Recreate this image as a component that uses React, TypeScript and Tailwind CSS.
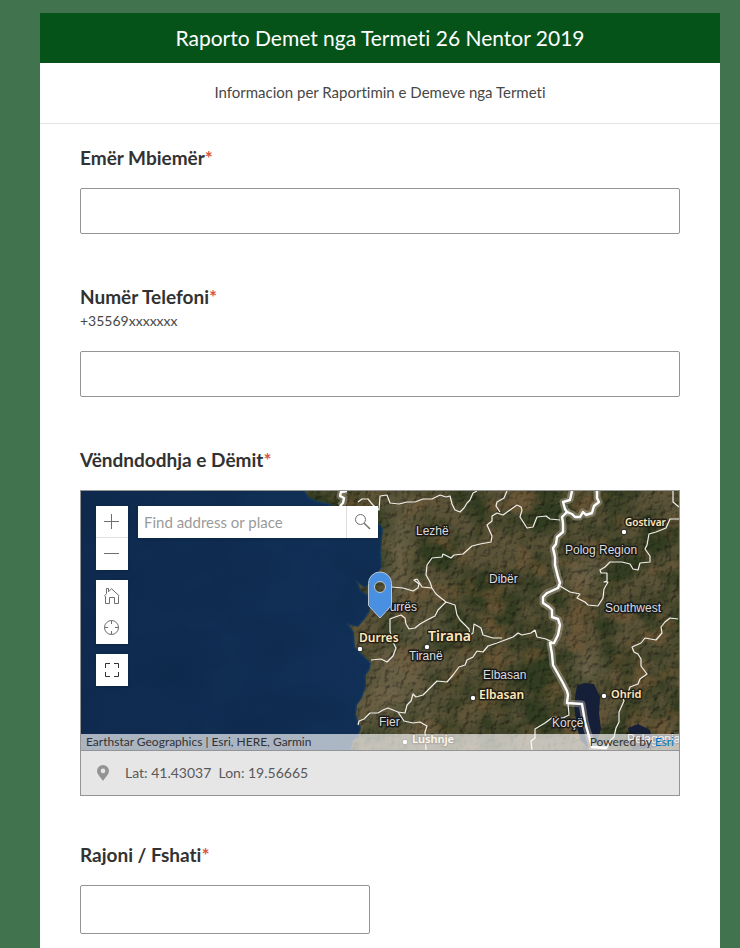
import { useState } from 'react';
import type { ReactNode } from 'react';

const inputClass = 'block w-full rounded-xs border border-[#949494] bg-white px-3 text-base text-[#323232] focus:outline-none focus:ring-1 focus:ring-[#06531a]';
const widgetClass = 'flex h-8 w-8 items-center justify-center bg-white text-[#6e6e6e] hover:bg-gray-100';

// first and second order boundaries, in map units
const regionLines = [
  'M277 11 281 8 287 8 292 14 298 19 299 5 306 4 309 12 318 13 326 11 334 11 342 8 351 8 359 4 365 6 369 5 371 13 374 19 379 21 383 17 386 12 389 9 392 2 396 0',
  'M311 96 322 97 332 100 337 97 338 93 333 89 336 88 341 96 351 97',
  'M365 111 357 119 354 125 346 129 339 133 334 137 328 138 325 133 324 127 320 124 314 126 309 128 309 140 311 149 315 157 312 165 306 171 300 168 290 169',
  'M365 111 374 114 376 124 379 129 382 132 388 138 389 144 392 142 393 133 400 137 402 144 412 147 421 147',
  'M365 111 355 103 351 97 349 91 345 84 346 74 351 67 361 66 362 63 370 67 373 64 382 63 391 55 399 53 410 51 411 45 406 34 411 30 411 25 416 22 422 24 429 19 436 14 440 16 441 19 439 26 446 37 452 36 456 26 465 25 469 28 479 29',
  'M419 21 415 15 416 11 423 7 426 0',
  'M592 0 592 11 598 16',
  'M598 28 589 28 585 37 575 41 568 43 566 54 564 58 569 65 569 71 559 72 557 79 552 78 549 73 541 71 529 71 524 76 519 79 520 82 526 82 526 90 523 91 527 91 523 98 522 107 517 115 507 114 504 111 496 107 499 103 489 101 479 95',
  'M597 128 589 127 584 131 580 136 581 142 575 149 564 147 560 152 551 156 553 161 557 163 560 168 560 175 566 183 559 188 557 193 549 196 547 202 541 204 543 210 538 221 538 231 535 237 533 246 529 250 526 257',
  'M471 151 465 148 456 146 454 139 450 142 441 144 437 142 432 146 424 149 416 152 407 155 402 161 396 160 392 166 386 169 384 174 378 176 372 184 366 191 356 190 342 204 335 206 332 203 330 210 326 214 324 222 317 221 307 217 302 219 297 222 289 222 283 228 278 230 277 234',
  'M317 221 323 230 332 232 339 231 346 235 344 241 345 259',
  'M487 212 488 224 482 227 472 226 464 232 454 238 454 247 450 250 451 259',
];

const countryLines = [
  'M266 0 260 1 259 5 263 7 262 12 259 15',
  'M491 0 489 9 482 11 484 18 486 21 481 26 482 32 482 41 476 46 475 53 472 57 474 66 474 74 477 86 479 92 477 97 466 102 462 106 462 112 468 116 471 119 471 126 477 128 479 134 477 144 473 152 469 152 471 163 472 174 482 192 486 200 487 204 486 212 501 213 504 231 511 256 526 257',
  'M516 0 516 7 518 11 513 15 511 22 505 24 502 21 499 26 494 26 491 23 486 21',
];

const regionLabels = [
  { x: 335, y: 44, text: 'Lezhë' },
  { x: 408, y: 92, text: 'Dibër' },
  { x: 300, y: 120, text: 'Durrës' },
  { x: 484, y: 63, text: 'Polog Region' },
  { x: 524, y: 121, text: 'Southwest' },
  { x: 328, y: 169, text: 'Tiranë' },
  { x: 402, y: 188, text: 'Elbasan' },
  { x: 298, y: 235, text: 'Fier' },
  { x: 471, y: 236, text: 'Korçë' },
  { x: 546, y: 252, text: 'Pelagonia' },
];

const cities = [
  { x: 544, y: 35, text: 'Gostivar', cx: 543, cy: 41, size: 10 },
  { x: 278, y: 151, text: 'Durres', cx: 279, cy: 158, size: 12 },
  { x: 347, y: 150, text: 'Tirana', cx: 346, cy: 156, size: 14 },
  { x: 398, y: 208, text: 'Elbasan', cx: 392, cy: 207, size: 12 },
  { x: 530, y: 207, text: 'Ohrid', cx: 523, cy: 205, size: 11 },
  { x: 331, y: 252, text: 'Lushnje', cx: 324, cy: 251, size: 11 },
];

const landPath = 'M224 0 228 6 236 10 246 12 256 16 268 17 282 22 292 26 297 31 302 37 301 48 300 61 301 76 294 88 284 97 277 92 280 99 287 104 290 111 289 120 284 128 277 136 268 134 273 141 274 156 281 163 290 172 289 178 285 184 285 195 281 207 276 214 275 224 280 237 277 246 272 250 270 259H598V0Z';

function SatelliteMap() {
  return (
    <svg className="absolute inset-0 h-full w-full" viewBox="0 0 598 259" preserveAspectRatio="xMidYMid slice" role="img" aria-label="Map">
      <defs>
        <linearGradient id="sea" x1="0" y1="0" x2="1" y2="0">
          <stop offset="0" stopColor="#0f2b4f" />
          <stop offset="0.25" stopColor="#102d52" />
          <stop offset="0.5" stopColor="#123158" />
        </linearGradient>
        <filter id="seaNoise" x="0" y="0" width="100%" height="100%" colorInterpolationFilters="sRGB">
          <feTurbulence type="fractalNoise" baseFrequency="0.012 0.02" numOctaves="3" seed="4" />
          <feColorMatrix values="0 0 0 0 0.04  0 0 0 0 0.14  0 0 0 0 0.26  2 0 0 0 -0.8" />
        </filter>
        <filter id="green" x="0" y="0" width="100%" height="100%" colorInterpolationFilters="sRGB">
          <feTurbulence type="fractalNoise" baseFrequency="0.025" numOctaves="7" seed="11" />
          <feColorMatrix values="0 0 0 0 0.17  0 0 0 0 0.22  0 0 0 0 0.11  3.5 0 0 0 -1.3" />
        </filter>
        <filter id="brown" x="0" y="0" width="100%" height="100%" colorInterpolationFilters="sRGB">
          <feTurbulence type="fractalNoise" baseFrequency="0.035 0.045" numOctaves="7" seed="27" />
          <feColorMatrix values="0 0 0 0 0.47  0 0 0 0 0.36  0 0 0 0 0.22  0 4 0 0 -2" />
        </filter>
        <filter id="relief" x="0" y="0" width="100%" height="100%" colorInterpolationFilters="sRGB">
          <feTurbulence type="fractalNoise" baseFrequency="0.16" numOctaves="4" seed="3" result="n" />
          <feColorMatrix in="n" values="0 0 0 0 0  0 0 0 0 0  0 0 0 0 0  1 0 0 0 0" />
          <feDiffuseLighting surfaceScale="3" diffuseConstant="1.3" lightingColor="#ffffff">
            <feDistantLight azimuth="225" elevation="50" />
          </feDiffuseLighting>
        </filter>
        <radialGradient id="plain" cx="0.5" cy="0.5" r="0.5">
          <stop offset="0" stopColor="#73684e" stopOpacity="0.8" />
          <stop offset="1" stopColor="#73684e" stopOpacity="0" />
        </radialGradient>
        <clipPath id="land">
          <path d={landPath} />
        </clipPath>
      </defs>

      <rect width="598" height="259" fill="url(#sea)" />
      <rect width="598" height="259" filter="url(#seaNoise)" opacity="0.35" />
      <path d={landPath} fill="none" stroke="#1c4560" strokeWidth="3" opacity="0.5" />
      <g clipPath="url(#land)">
        <rect width="598" height="259" fill="#5a5338" />
        <rect width="598" height="259" filter="url(#green)" opacity="0.85" />
        <rect width="598" height="259" filter="url(#brown)" opacity="0.6" />
        <ellipse cx="318" cy="60" rx="26" ry="80" fill="url(#plain)" />
        <ellipse cx="310" cy="200" rx="60" ry="75" fill="url(#plain)" />
        <ellipse cx="345" cy="140" rx="40" ry="22" fill="url(#plain)" />
        <ellipse cx="507" cy="180" rx="26" ry="26" fill="url(#plain)" />
        <ellipse cx="505" cy="85" rx="24" ry="22" fill="url(#plain)" />
        <rect width="598" height="259" filter="url(#relief)" opacity="0.5" className="mix-blend-multiply" />
      </g>
      <path d="M496 194 504 192 513 193 519 206 518 222 520 238 516 250 508 257 500 250 496 237 493 214Z" fill="#161f38" />
      <path d="M547 237 557 233 569 239 573 257 551 259 549 247Z" fill="#161f38" />

      <g fill="none" strokeLinejoin="round">
        {countryLines.map((d) => <path key={d} d={d} stroke="#c8bfae" strokeOpacity="0.4" strokeWidth="7" />)}
        {regionLines.map((d) => <path key={d} d={d} stroke="#f1efe9" strokeWidth="1.2" />)}
        {countryLines.map((d) => <path key={d} d={d} stroke="#ffffff" strokeWidth="2.4" />)}
      </g>

      <g fontFamily="'Liberation Sans', Arial, sans-serif" fontSize="12" fill="#dcdcdc" stroke="#1a1a1a" strokeWidth="3" strokeLinejoin="round" paintOrder="stroke">
        {regionLabels.map((l) => <text key={l.text} x={l.x} y={l.y}>{l.text}</text>)}
      </g>
      <g fontFamily="'Noto Sans', 'Open Sans', sans-serif" fontWeight="600" fill="#ffe9bd" stroke="#241f14" strokeWidth="3" strokeLinejoin="round" paintOrder="stroke">
        {cities.map((c) => <text key={c.text} x={c.x} y={c.y} fontSize={c.size}>{c.text}</text>)}
      </g>
      {cities.map((c) => <circle key={c.text} cx={c.cx} cy={c.cy} r="2.8" fill="#fff" stroke="#222" strokeWidth="1" />)}

      <path fillRule="evenodd" d="M287.500 92.500a11.500 11.500 0 0 1 23 0v22L299 127l-11.500-12.500ZM304.500 96a5.500 5.500 0 1 0-11 0 5.500 5.500 0 0 0 11 0Z" fill="#4a90e2" stroke="#b9c6d2" strokeWidth="1" />
    </svg>
  );
}

function Label({ htmlFor, children }: { htmlFor: string; children: ReactNode }) {
  return (
    <label htmlFor={htmlFor} className="block text-[19px]/6 font-bold text-[#323232]">
      {children}<span className="text-[#d9553f]">*</span>
    </label>
  );
}

export default function App() {
  const [form, setForm] = useState({ name: '', phone: '', place: '', village: '' });

  function set(key: string, value: string) {
    setForm((p) => ({ ...p, [key]: value }));
  }

  return (
    <div className="flex min-h-screen flex-col bg-[#41734f] pt-[13px] pr-5 pl-10 font-['Lato',sans-serif] [font-variant-ligatures:none]">
      <main className="flex flex-1 flex-col bg-white">
        <header className="bg-[#06531a] px-5 py-[11px] text-center">
          <h1 className="text-[21px]/7 text-white">Raporto Demet nga Termeti 26 Nentor 2019</h1>
        </header>
        <p className="border-b border-[#e3e3e3] px-10 pt-[17px] pb-[19px] text-center text-[15px]/6 text-[#474747]">Informacion per Raportimin e Demeve nga Termeti</p>

        <form className="px-10 pt-[22px]" onSubmit={(e) => e.preventDefault()}>
          <div className="mb-[51px]">
            <Label htmlFor="name">Emër Mbiemër</Label>
            <input id="name" value={form.name} onChange={(e) => set('name', e.target.value)} required className={`${inputClass} mt-[18px] h-[46px]`} />
          </div>

          <div className="mb-[51px]">
            <Label htmlFor="phone">Numër Telefoni</Label>
            <p id="phone-hint" className="text-sm/6 text-[#474747]">+35569xxxxxxx</p>
            <input id="phone" type="tel" aria-describedby="phone-hint" value={form.phone} onChange={(e) => set('phone', e.target.value)} required className={`${inputClass} mt-[18px] h-[46px]`} />
          </div>

          {/* Location */}
          <div className="mb-[47px]">
            <Label htmlFor="place">Vëndndodhja e Dëmit</Label>
            <div className="mt-[18px] border border-[#949494]">
              <div className="relative h-[259px] overflow-hidden">
                <SatelliteMap />

                <div className="absolute top-[15px] left-[15px] flex items-start gap-2.5">
                  <div className="flex flex-col gap-2.5">
                    <div className="shadow-sm">
                      <button type="button" aria-label="Zoom in" className={`${widgetClass} border-b border-[#e0e0e0]`}>
                        <svg width="16" height="16" viewBox="0 0 16 16" stroke="currentColor"><path d="M0 7.500h15M7.500 0v15" /></svg>
                      </button>
                      <button type="button" aria-label="Zoom out" className={widgetClass}>
                        <svg width="16" height="16" viewBox="0 0 16 16" stroke="currentColor"><path d="M0 7.500h15" /></svg>
                      </button>
                    </div>
                    <div className="shadow-sm">
                      <button type="button" aria-label="Default map view" className={widgetClass}>
                        <svg width="16" height="16" viewBox="0 0 16 16" fill="none" stroke="currentColor"><path d="M1.500 15.500V8.500L0.500 7.700 2.500 5.800V0.500H4.500V3.800L7.500 0.700 15 7.700 14.500 8.500V15.500H10.500V9.500H5.500V15.500Z" /></svg>
                      </button>
                      <button type="button" aria-label="Find my location" className={widgetClass}>
                        <svg width="16" height="16" viewBox="0 0 16 16" fill="none" stroke="currentColor"><circle cx="7.500" cy="7.500" r="7" /><path d="M7.500 0.500V4M7.500 11V14.500M0.500 7.500H4M11 7.500H14.500" /></svg>
                      </button>
                    </div>
                    <button type="button" aria-label="Enter fullscreen" className={`${widgetClass} shadow-sm`}>
                      <svg width="16" height="16" viewBox="0 0 16 16" fill="none" stroke="#323232"><path d="M1.500 6V1.500H6M10 1.500H14.500V6M14.500 10V14.500H10M6 14.500H1.500V10" /></svg>
                    </button>
                  </div>
                  <div className="flex w-60 bg-white shadow-sm">
                    <input id="place" value={form.place} onChange={(e) => set('place', e.target.value)} placeholder="Find address or place" className="h-8 min-w-0 flex-1 px-1.5 text-[15px] text-[#323232] placeholder:text-[#9a9a9a] focus:outline-none" />
                    <button type="button" aria-label="Search" className={`${widgetClass} border-l border-[#dedede]`}>
                      <svg width="16" height="16" viewBox="0 0 16 16" fill="none" stroke="currentColor"><circle cx="5.500" cy="5.500" r="5" /><path d="M9.200 9.200 15 15" strokeWidth="1.400" /></svg>
                    </button>
                  </div>
                </div>

                <div className="absolute inset-x-0 bottom-0 flex justify-between bg-white/65 px-[5px] text-xs/4 text-[#323232]">
                  <span>Earthstar Geographics | Esri, HERE, Garmin</span>
                  <span>Powered by <a href="https://www.esri.com/" className="text-[#0079c1]">Esri</a></span>
                </div>
              </div>

              <div className="flex h-[45px] items-center gap-4 border-t border-[#949494] bg-[#e6e6e6] px-4 text-sm text-[#595959]">
                <svg width="12" height="16" viewBox="0 0 12 16" fill="#949494" fillRule="evenodd"><path d="M6 0a6 6 0 0 1 6 6c0 3.500-4 6.500-6 10C4 12.500 0 9.500 0 6a6 6 0 0 1 6-6Zm0 3.600a2.300 2.300 0 1 0 0 4.600 2.300 2.300 0 0 0 0-4.600Z" /></svg>
                <span className="whitespace-pre">Lat: 41.43037  Lon: 19.56665</span>
              </div>
            </div>
          </div>

          <div>
            <Label htmlFor="village">Rajoni / Fshati</Label>
            <input id="village" value={form.village} onChange={(e) => set('village', e.target.value)} required className={`${inputClass} mt-[18px] h-[49px] max-w-[290px]`} />
          </div>
        </form>
      </main>
    </div>
  );
}
